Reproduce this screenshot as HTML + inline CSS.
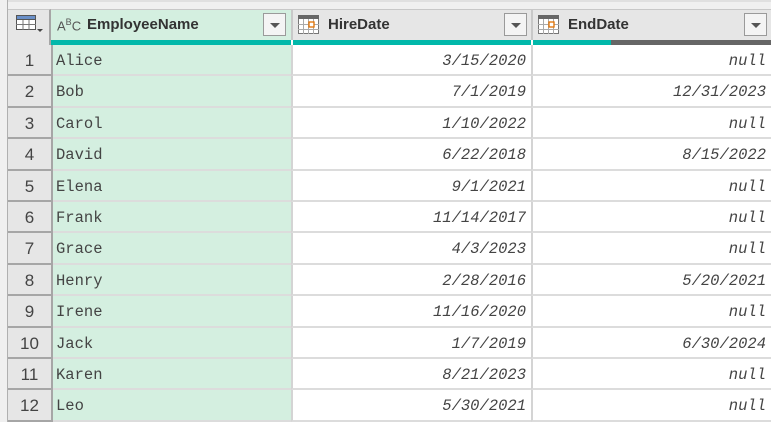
<!DOCTYPE html>
<html><head><style>
*{margin:0;padding:0;box-sizing:border-box}
body{width:771px;height:422px;overflow:hidden;background:#fff;position:relative;font-family:"Liberation Sans",sans-serif}
.a{position:absolute}
.hdr{top:9px;height:31px;background:#e6e6e6;border-top:1px solid #c8c8c8}
.dd{position:absolute;top:3px;width:23px;height:23px;border:1px solid #9a9a9a;background:#f4f4f4}
.dd:after{content:"";position:absolute;left:6px;top:9px;border-left:5px solid transparent;border-right:5px solid transparent;border-top:5px solid #555}
.ht{position:absolute;top:6px;font-weight:bold;font-size:15px;color:#333}
.row{position:absolute;left:0;width:771px;height:31.4px}
.idx{position:absolute;left:8px;width:43px;height:100%;background:#e6e6e6;border-bottom:2px solid #a6a6a6;font-size:17px;color:#444;text-align:center;line-height:32px}
.c{position:absolute;height:100%;border-bottom:2px solid #dcdcdc;font-family:"Liberation Mono",monospace;font-size:15.5px;color:#444;line-height:33px}
.n{left:51px;width:240px;background:#d4efe0;padding-left:5px}
.h{left:291px;width:240px;text-align:right;padding-right:5px;font-style:italic;border-left:2px solid #d4d4d4}
.e{left:531px;width:240px;text-align:right;padding-right:5px;font-style:italic;border-left:2px solid #d4d4d4}
</style></head><body>
<div class="a" style="left:0;top:0;width:771px;height:9px;background:#f0f0f0;border-top:2px solid #e0e0e0"></div>
<div class="a" style="left:0;top:0;width:8px;height:422px;background:#f0f0f0;border-right:1px solid #b0b0b0"></div>
<div class="a hdr" style="left:8px;width:43px;border-right:2px solid #a6a6a6"></div>
<svg class="a" style="left:16px;top:15px" width="30" height="20"><rect x="0.5" y="0.5" width="19" height="14" fill="#fff" stroke="#555"/><rect x="0.5" y="0.5" width="19" height="4" fill="#6a8fc8" stroke="#555"/><path d="M0 9.5h20M7 5v10M13 5v10" stroke="#777"/><path d="M21 14l3 3 3-3z" fill="#444"/></svg>
<div class="a hdr" style="left:51px;width:240px;background:#d4efe0"><span style="position:absolute;left:6px;top:7px;font-size:13px;color:#555">A<sup style="font-size:9px">B</sup>C</span><span class="ht" style="left:36px">EmployeeName</span><div class="dd" style="left:212px"></div></div>
<div class="a hdr" style="left:291px;width:240px;border-left:2px solid #c8c8c8"><svg style="position:absolute;left:5px;top:5px" width="22" height="20"><rect x="0.5" y="0.5" width="20" height="18" fill="#fff" stroke="#777"/><rect x="0" y="0" width="21" height="4" fill="#666"/><path d="M0 9.5h21M0 14.5h21M5.5 4v15M10.5 4v15M15.5 4v15" stroke="#aaa"/><rect x="11" y="7" width="5" height="5" fill="#fff" stroke="#e07000" stroke-width="1.3"/></svg><span class="ht" style="left:35px">HireDate</span><div class="dd" style="left:211px"></div></div>
<div class="a hdr" style="left:531px;width:240px;border-left:2px solid #c8c8c8"><svg style="position:absolute;left:5px;top:5px" width="22" height="20"><rect x="0.5" y="0.5" width="20" height="18" fill="#fff" stroke="#777"/><rect x="0" y="0" width="21" height="4" fill="#666"/><path d="M0 9.5h21M0 14.5h21M5.5 4v15M10.5 4v15M15.5 4v15" stroke="#aaa"/><rect x="11" y="7" width="5" height="5" fill="#fff" stroke="#e07000" stroke-width="1.3"/></svg><span class="ht" style="left:35px">EndDate</span><div class="dd" style="left:211px"></div></div>
<div class="a" style="left:8px;top:40px;width:43px;height:6px;background:#e6e6e6;border-right:2px solid #a6a6a6"></div>
<div class="a" style="left:51px;top:40px;width:240px;height:5px;background:#01b8aa"></div>
<div class="a" style="left:293px;top:40px;width:238px;height:5px;background:#01b8aa"></div>
<div class="a" style="left:533px;top:40px;width:78px;height:5px;background:#01b8aa"></div>
<div class="a" style="left:611px;top:40px;width:160px;height:5px;background:#666"></div>
<div class="a" style="left:0;top:45px">
<div class="row" style="top:0"><div class="idx">1</div><div class="c n">Alice</div><div class="c h">3/15/2020</div><div class="c e">null</div></div>
<div class="row" style="top:31.4px"><div class="idx">2</div><div class="c n">Bob</div><div class="c h">7/1/2019</div><div class="c e">12/31/2023</div></div>
<div class="row" style="top:62.8px"><div class="idx">3</div><div class="c n">Carol</div><div class="c h">1/10/2022</div><div class="c e">null</div></div>
<div class="row" style="top:94.2px"><div class="idx">4</div><div class="c n">David</div><div class="c h">6/22/2018</div><div class="c e">8/15/2022</div></div>
<div class="row" style="top:125.6px"><div class="idx">5</div><div class="c n">Elena</div><div class="c h">9/1/2021</div><div class="c e">null</div></div>
<div class="row" style="top:157px"><div class="idx">6</div><div class="c n">Frank</div><div class="c h">11/14/2017</div><div class="c e">null</div></div>
<div class="row" style="top:188.4px"><div class="idx">7</div><div class="c n">Grace</div><div class="c h">4/3/2023</div><div class="c e">null</div></div>
<div class="row" style="top:219.8px"><div class="idx">8</div><div class="c n">Henry</div><div class="c h">2/28/2016</div><div class="c e">5/20/2021</div></div>
<div class="row" style="top:251.2px"><div class="idx">9</div><div class="c n">Irene</div><div class="c h">11/16/2020</div><div class="c e">null</div></div>
<div class="row" style="top:282.6px"><div class="idx">10</div><div class="c n">Jack</div><div class="c h">1/7/2019</div><div class="c e">6/30/2024</div></div>
<div class="row" style="top:314px"><div class="idx">11</div><div class="c n">Karen</div><div class="c h">8/21/2023</div><div class="c e">null</div></div>
<div class="row" style="top:345.4px"><div class="idx">12</div><div class="c n">Leo</div><div class="c h">5/30/2021</div><div class="c e">null</div></div>
</div>
<div class="a" style="left:51px;top:45px;width:2px;height:377px;background:#a6a6a6"></div>
</body></html>
